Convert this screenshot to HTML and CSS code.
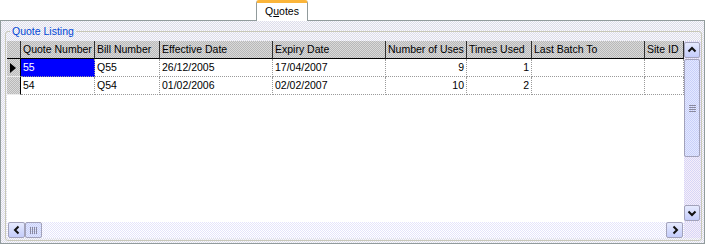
FILE: index.html
```html
<!DOCTYPE html>
<html lang="en">
<head>
  <meta charset="UTF-8" />
  <title>Quotes</title>
  <link rel="stylesheet" href="styles.css">
</head>
<body>

  <div class="tabs">
    <div class="tab">Q<u>u</u>otes</div>
  </div>

  <div class="panel">
    <fieldset class="group">
      <legend>Quote Listing</legend>

      <div class="grid">
        <div class="dg">
          <div class="hd sel"></div>
          <div class="hd">Quote Number</div>
          <div class="hd">Bill Number</div>
          <div class="hd">Effective Date</div>
          <div class="hd">Expiry Date</div>
          <div class="hd">Number of Uses</div>
          <div class="hd">Times Used</div>
          <div class="hd">Last Batch To</div>
          <div class="hd">Site ID</div>

          <div class="rs">
            <svg width="6" height="10" viewBox="0 0 6 10"><polygon points="0,0 6,5 0,10" fill="#000"/></svg>
          </div>
          <div class="cell current">55</div>
          <div class="cell">Q55</div>
          <div class="cell">26/12/2005</div>
          <div class="cell">17/04/2007</div>
          <div class="cell num">9</div>
          <div class="cell num">1</div>
          <div class="cell"></div>
          <div class="cell"></div>

          <div class="rs"></div>
          <div class="cell">54</div>
          <div class="cell">Q54</div>
          <div class="cell">01/02/2006</div>
          <div class="cell">02/02/2007</div>
          <div class="cell num">10</div>
          <div class="cell num">2</div>
          <div class="cell"></div>
          <div class="cell"></div>
        </div>

        <div class="vscroll">
          <div class="sb-btn">
            <svg width="14" height="14" viewBox="0 0 14 14"><polyline points="3.5,8.5 7,5 10.5,8.5" fill="none" stroke="#111" stroke-width="2"/></svg>
          </div>
          <div class="sb-thumb vthumb"><span class="grip-h"></span></div>
          <div class="sb-track"></div>
          <div class="sb-btn">
            <svg width="14" height="14" viewBox="0 0 14 14"><polyline points="3.5,5.5 7,9 10.5,5.5" fill="none" stroke="#111" stroke-width="2"/></svg>
          </div>
        </div>

        <div class="hscroll">
          <div class="sb-btn">
            <svg width="14" height="14" viewBox="0 0 14 14"><polyline points="8.5,3.5 5,7 8.5,10.5" fill="none" stroke="#111" stroke-width="2"/></svg>
          </div>
          <div class="sb-thumb hthumb"><span class="grip-v"></span></div>
          <div class="sb-track"></div>
          <div class="sb-btn">
            <svg width="14" height="14" viewBox="0 0 14 14"><polyline points="5.5,3.5 9,7 5.5,10.5" fill="none" stroke="#111" stroke-width="2"/></svg>
          </div>
        </div>

        <div class="corner"></div>
      </div>
    </fieldset>
  </div>

</body>
</html>
```

FILE: styles.css
```css
* {
  box-sizing: border-box;
}

body {
  margin: 0;
  background: #fff;
  font-family: "Liberation Sans", Arial, sans-serif;
  font-size: 10.5px;
  color: #000;
}

/* tab strip */
.tabs {
  height: 20px;
  display: flex;
  padding-left: 256px;
}

.tab {
  position: relative;
  z-index: 1;
  width: 52px;
  height: 21px;
  border: 1px solid #919b9c;
  border-bottom: none;
  border-top: 3px solid #fbb53a;
  border-radius: 3px 3px 0 0;
  background: #fff;
  text-align: center;
  line-height: 14px;
  padding-top: 1px;
}

.tab u {
  text-decoration-thickness: 1px;
  text-underline-offset: 1px;
}

/* tab page */
.panel {
  width: 705px;
  height: 224px;
  border: 1px solid #919b9c;
  padding: 4px 3px 0 4px;
  background: repeating-conic-gradient(#dcdcec 0 25%, #fafafa 0 50%) 0 0 / 2px 2px;
}

.group {
  margin: 0;
  width: 697px;
  height: 216px;
  padding: 3px 0 2px 1px;
  border: 1px solid #c8c8b8;
  border-radius: 3px;
}

.group legend {
  margin-left: 3px;
  padding: 0 2px;
  line-height: 13px;
  color: #0046d5;
}

/* data grid */
.grid {
  display: grid;
  grid-template-columns: 677px 1fr;
  grid-template-rows: 181px 16px;
  background: #fff;
}

.dg {
  display: grid;
  grid-template-columns: 14px 74px 65px 113px 113px 81px 65px 113px 39px;
  grid-auto-rows: 18px;
  align-content: start;
  overflow: hidden;
}

.hd {
  background: repeating-conic-gradient(#b8b8b8 0 25%, #dadada 0 50%) 0 0 / 2px 2px;
  border-right: 1px solid #303030;
  border-bottom: 1px solid #000;
  padding: 0 1px 0 2px;
  line-height: 17px;
  white-space: nowrap;
  overflow: hidden;
}

.rs {
  background: repeating-conic-gradient(#b8b8b8 0 25%, #dadada 0 50%) 0 0 / 2px 2px;
  border-right: 1px solid #000;
  border-bottom: 1px solid #ececec;
  display: flex;
  align-items: center;
  padding-left: 3px;
}

.cell {
  border-right: 1px dotted #9a9a9a;
  border-bottom: 1px dotted #9a9a9a;
  padding: 0 2px 0 2px;
  line-height: 17px;
  white-space: nowrap;
  overflow: hidden;
}

.cell.num {
  text-align: right;
}

.cell.current {
  background: #0000ff;
  color: #fff;
}

/* scroll bars */
.vscroll {
  display: flex;
  flex-direction: column;
  padding: 1px 1px 1px 0;
  background: repeating-conic-gradient(#d6d6f6 0 25%, #f6eefa 0 50%) 0 0 / 2px 2px;
}

.hscroll {
  display: flex;
  padding: 0 1px 0 1px;
  background: repeating-conic-gradient(#e4e4fb 0 25%, #fff 0 50%) 0 0 / 2px 2px;
}

.sb-btn {
  flex: 0 0 16px;
  height: 16px;
  width: 16px;
  border: 1px solid #a2a2ba;
  border-radius: 2px;
  background: linear-gradient(#e6eafe, #c4ccfa);
  display: flex;
  align-items: center;
  justify-content: center;
}

.hscroll .sb-btn {
  flex-basis: 17px;
  width: 17px;
}

.sb-thumb {
  border: 1px solid #a2a2ba;
  border-radius: 2px;
  background: repeating-conic-gradient(#c8d0fa 0 25%, #e4e8fe 0 50%) 0 0 / 2px 2px;
  display: flex;
  align-items: center;
  justify-content: center;
}

.vthumb {
  flex: 0 0 98px;
  margin-top: 1px;
}

.hthumb {
  flex: 0 0 17px;
}

.sb-track {
  flex: 1;
}

.grip-h {
  width: 7px;
  height: 7px;
  background: repeating-linear-gradient(#8a8aa0 0 1px, transparent 1px 2px);
}

.grip-v {
  width: 7px;
  height: 7px;
  background: repeating-linear-gradient(90deg, #8a8aa0 0 1px, transparent 1px 2px);
}

.corner {
  background: repeating-conic-gradient(#d6d6f6 0 25%, #f6eefa 0 50%) 0 0 / 2px 2px;
}
```
